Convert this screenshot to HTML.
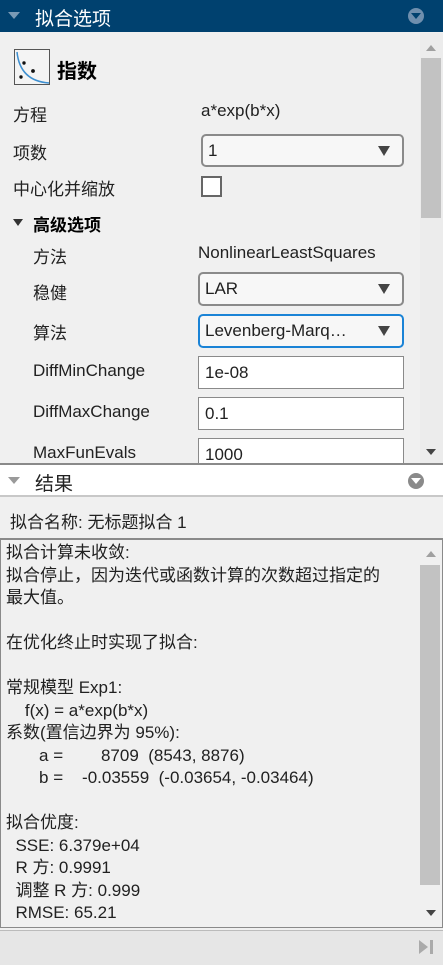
<!DOCTYPE html><html><head><meta charset="utf-8"><style>
*{margin:0;padding:0;box-sizing:border-box}
body{width:443px;height:965px;overflow:hidden;background:#f0f0f0;position:relative;font-family:"Liberation Sans","Noto Sans CJK SC",sans-serif;font-size:17px;color:#212121}
.a{position:absolute;white-space:nowrap}
.dd{position:absolute;background:#f7f7f7;border:2px solid #8a8a8a;border-radius:5px;padding-left:5px;line-height:29px}
.dd:after{content:"";position:absolute;right:12px;top:10px;border-left:6px solid transparent;border-right:6px solid transparent;border-top:10px solid #444}
.tb{position:absolute;background:#fff;border:1px solid #8a8a8a;padding-left:6px;line-height:31px}
.tri{position:absolute;border-left:6px solid transparent;border-right:6px solid transparent;border-top:7px solid #555}
</style></head><body>
<div class="a" style="left:0;top:0;width:443px;height:32px;background:#00416f"></div>
<div class="tri" style="left:8px;top:12px;border-top-color:#7a9ab5"></div>
<div class="a" style="left:35px;top:4px;color:#fff;font-size:19px">拟合选项</div>
<div class="a" style="left:408px;top:8px;width:16px;height:16px;border-radius:50%;background:#6f8fae"></div>
<div class="tri" style="left:411px;top:13px;border-left-width:5px;border-right-width:5px;border-top:6px solid #00416f"></div>
<div class="a" style="left:420px;top:33px;width:23px;height:430px;background:#ececec"></div>
<div class="a" style="left:421px;top:58px;width:20px;height:160px;background:#c2c2c2"></div>
<div class="a" style="left:426px;top:45px;border-left:5px solid transparent;border-right:5px solid transparent;border-bottom:6px solid #a0a0a0"></div>
<div class="a" style="left:426px;top:449px;border-left:5px solid transparent;border-right:5px solid transparent;border-top:6px solid #444"></div>
<svg class="a" style="left:14px;top:49px" width="36" height="36"><rect x="0.5" y="0.5" width="35" height="35" fill="#f4f4f4" stroke="#555"/><path d="M3 3 Q6 32 35 34" fill="none" stroke="#3d8fd0" stroke-width="1.5"/><circle cx="10" cy="14" r="1.7" fill="#111"/><circle cx="19" cy="22" r="1.9" fill="#111"/><circle cx="7" cy="28" r="1.7" fill="#111"/></svg>
<div class="a" style="left:57px;top:55px;font-size:20px;font-weight:bold;color:#000">指数</div>
<div class="a" style="left:13px;top:101px">方程</div>
<div class="a" style="left:201px;top:101px">a*exp(b*x)</div>
<div class="a" style="left:13px;top:139px">项数</div>
<div class="dd" style="left:201px;top:134px;width:203px;height:33px">1</div>
<div class="a" style="left:13px;top:175px">中心化并缩放</div>
<div class="a" style="left:201px;top:176px;width:21px;height:21px;background:#fff;border:2px solid #666"></div>
<div class="tri" style="left:13px;top:219px;border-top-color:#333;border-left-width:5px;border-right-width:5px"></div>
<div class="a" style="left:33px;top:211px;font-weight:bold;color:#000">高级选项</div>
<div class="a" style="left:33px;top:243px">方法</div>
<div class="a" style="left:198px;top:243px">NonlinearLeastSquares</div>
<div class="a" style="left:33px;top:279px">稳健</div>
<div class="dd" style="left:198px;top:272px;width:206px;height:34px">LAR</div>
<div class="a" style="left:33px;top:319px">算法</div>
<div class="dd" style="left:198px;top:314px;width:206px;height:34px;border-color:#1a83d6">Levenberg-Marq…</div>
<div class="a" style="left:33px;top:361px">DiffMinChange</div>
<div class="tb" style="left:198px;top:356px;width:206px;height:33px">1e-08</div>
<div class="a" style="left:33px;top:402px">DiffMaxChange</div>
<div class="tb" style="left:198px;top:397px;width:206px;height:33px">0.1</div>
<div class="a" style="left:33px;top:443px">MaxFunEvals</div>
<div class="tb" style="left:198px;top:438px;width:206px;height:30px">1000</div>
<div class="a" style="left:0;top:463px;width:443px;height:34px;background:#fff;border-top:2px solid #8a8a8a;border-bottom:2px solid #c8c8c8"></div>
<div class="tri" style="left:8px;top:477px;border-top-color:#9a9a9a"></div>
<div class="a" style="left:35px;top:469px;font-size:19px">结果</div>
<div class="a" style="left:408px;top:473px;width:16px;height:16px;border-radius:50%;background:#8a8a8a"></div>
<div class="tri" style="left:411px;top:478px;border-left-width:5px;border-right-width:5px;border-top:6px solid #fff"></div>
<div class="a" style="left:10px;top:508px">拟合名称: 无标题拟合 1</div>
<div class="a" style="left:0;top:538px;width:443px;height:390px;border:1px solid #8a8a8a;border-top:2px solid #8a8a8a"></div>
<div class="a" style="left:420px;top:565px;width:20px;height:320px;background:#c2c2c2"></div>
<div class="a" style="left:426px;top:551px;border-left:5px solid transparent;border-right:5px solid transparent;border-bottom:6px solid #a0a0a0"></div>
<div class="a" style="left:426px;top:910px;border-left:5px solid transparent;border-right:5px solid transparent;border-top:6px solid #444"></div>
<div class="a" style="left:6px;top:542px;line-height:22.5px;white-space:pre">拟合计算未收敛:
拟合停止，因为迭代或函数计算的次数超过指定的
最大值。

在优化终止时实现了拟合:

常规模型 Exp1:
    f(x) = a*exp(b*x)
系数(置信边界为 95%):
       a =        8709  (8543, 8876)
       b =    -0.03559  (-0.03654, -0.03464)

拟合优度:
  SSE: 6.379e+04
  R 方: 0.9991
  调整 R 方: 0.999
  RMSE: 65.21</div>
<div class="a" style="left:0;top:930px;width:443px;height:35px;background:#e6e6e6;border-top:1px solid #bbb"></div>
<div class="a" style="left:419px;top:940px;border-top:7px solid transparent;border-bottom:7px solid transparent;border-left:9px solid #aaa"></div>
<div class="a" style="left:430px;top:940px;width:3px;height:14px;background:#aaa"></div>
</body></html>
